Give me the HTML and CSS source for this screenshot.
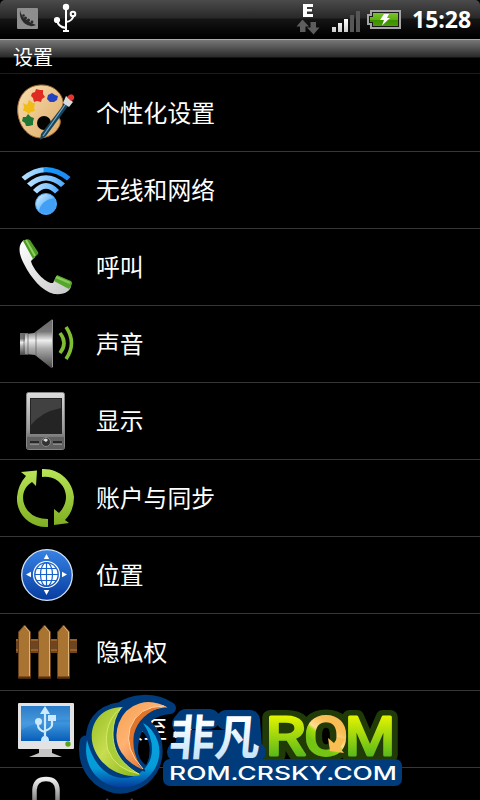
FILE: index.html
```html
<!DOCTYPE html>
<html lang="zh-CN">
<head>
    <meta charset="UTF-8">
    <meta name="viewport" content="width=device-width, initial-scale=1.0">
    <title>设置</title>
    <link rel="stylesheet" href="styles.css">
</head>
<body>
    <div class="phone">
        <div class="statusbar">
            <svg class="notify" width="80" height="39" viewBox="0 0 80 39">
                <rect x="17" y="8" width="21" height="21" rx="1" fill="#8e8e8e"/>
                <path d="M20 10Q21 17 27 20Q32 24 36 25Q30 28 24 23Q19 18 20 10Z" fill="#292929"/>
                <g fill="#292929"><circle cx="23.5" cy="15.500" r="1.300"/><circle cx="25.5" cy="18" r="1.500"/><circle cx="28.5" cy="20" r="1.500"/><circle cx="32" cy="22" r="1.400"/></g>
                <g fill="none" stroke="#fff" stroke-width="2">
                    <path d="M66 7V30M57 20Q58 27 66 28M66 22Q73 21 73.500 15" />
                    <circle cx="73" cy="14" r="2.300"/>
                </g>
                <circle cx="66" cy="7" r="3.200" fill="#fff"/>
                <circle cx="57" cy="20" r="3.100" fill="#fff"/>
                <path d="M63 30h6v2h-6z" fill="#fff"/>
            </svg>
            <svg class="signals" width="110" height="39" viewBox="295 0 110 39">
                <path d="M303 4h10v3h-6v2h5v2.500h-5v2.500h6v3h-10z" fill="#fff"/>
                <path d="M302.500 19.500L309 26.500h-3.500V32h-5.500v-5.500h-3.500zM313.500 34.500L307 27.500h3.500V22h5.500v5.500h3.500z" fill="#5d5d5d"/>
                <g fill="url(#bars)">
                    <path d="M332 27h4v5h-4zM338 23h4v9h-4zM344 19h4v13h-4z"/>
                </g>
                <path d="M350 15h4v17h-4zM356 11h4v21h-4z" fill="#565656"/>
                <path d="M371 11h29v17h-29v-4h-3v-9h3z" fill="#191919" stroke="#a5a5a5" stroke-width="2"/>
                <path d="M373 13h25v13h-25v-4h-3v-5h3z" fill="url(#battery)"/>
                <path d="M384 14h5l-2 4h3l-8 7.500 2-5.500h-4z" fill="#fff"/>
                <defs>
                    <linearGradient id="bars" x2="0" y2="1"><stop stop-color="#fff"/><stop offset="1" stop-color="#ccc"/></linearGradient>
                    <linearGradient id="battery" x2="0" y2="1"><stop stop-color="#79c52b"/><stop offset=".5" stop-color="#5fb010"/><stop offset=".55" stop-color="#3c8f00"/><stop offset="1" stop-color="#4a9d05"/></linearGradient>
                </defs>
            </svg>
            <span class="clock">15:28</span>
        </div>
        <div class="titlebar">设置</div>

        <ul class="settings">
            <li>
                <svg class="icon" viewBox="0 0 96 76">
                    <defs><linearGradient id="wood" x2="1" y2="1"><stop stop-color="#f9dfb0"/><stop offset="1" stop-color="#dda965"/></linearGradient></defs>
                    <path d="M40 10C56 9 64 22 63 29C62 35 56 38 59 43C63 47 58 57 49 61C36 67 24 58 20 47C13 29 22 11 40 10Z" fill="url(#wood)" stroke="#9b6731"/>
                    <circle cx="44" cy="48" r="7" fill="#050300"/>
                    <path d="M32 18l3-1 1-3 4 1 3 0 0 4 2 3-3 2-1 3-4-1-3 1-1-4-2-2z" fill="#e02b23"/>
                    <path d="M48 20l4-2 3 2 3 1-1 4-3 2-4 0-3-3z" fill="#2442c4"/>
                    <path d="M23 28l4 2 2-5 4 3 2 0-1 5 1 3-4 1-2 2-4-3-2 0 1-4z" fill="#f1bb18"/>
                    <path d="M23 42l3 0 2-3 3 3 3 1-1 4 0 3-4 1-3 0-1-3-3-2z" fill="#207634"/>
                    <path d="M68 24l3 3-25 34-6 4 1-6z" fill="#17455f"/>
                    <path d="M67 27L43 61" stroke="#75a9c4" stroke-width="1.200"/>
                    <path d="M66 21l7 6-4 5-6-4z" fill="#d9dadb"/>
                    <path d="M67 22q4-5 7-1 1 4-3 5z" fill="#e93529"/>
                </svg>
                <span>个性化设置</span>
            </li>
            <li>
                <svg class="icon" viewBox="0 0 96 76">
                    <defs>
                        <linearGradient id="wave" x2="1" y2="0"><stop stop-color="#b5dfff"/><stop offset=".44" stop-color="#8bccff"/><stop offset=".46" stop-color="#139aff"/><stop offset="1" stop-color="#2188f2"/></linearGradient>
                        <linearGradient id="wave2" x2="1" y2="0"><stop stop-color="#b9e1ff"/><stop offset=".6" stop-color="#86c8ff"/><stop offset="1" stop-color="#48a9ff"/></linearGradient>
                        <linearGradient id="ball" x2="1" y2="1"><stop offset=".1" stop-color="#d0ebff"/><stop offset=".5" stop-color="#6fbcfb"/><stop offset="1" stop-color="#2b8df0"/></linearGradient>
                    </defs>
                    <path d="M21.500 25Q46 5 70.500 25L67 28.500Q46 12 25 28.500Z" fill="url(#wave)"/>
                    <path d="M27 31.500Q46 15 65 31.500L61 35Q46 22 31 35Z" fill="url(#wave2)"/>
                    <path d="M33 38Q46 24 59 38L55 41.500Q46 32 37 41.500Z" fill="url(#wave2)"/>
                    <circle cx="46" cy="52" r="10.500" fill="url(#ball)" stroke="#4aa5f7"/>
                    <path d="M39 59Q41 48 55 46Q57 55 50 60Q44 63 39 59Z" fill="#429ff6"/>
                </svg>
                <span>无线和网络</span>
            </li>
            <li>
                <svg class="icon" viewBox="0 0 96 76">
                    <defs><linearGradient id="phone" x2="1" y2="1"><stop stop-color="#fff"/><stop offset="1" stop-color="#c7c7c7"/></linearGradient></defs>
                    <path d="M24 11C18 15 18 24 24 35C31 49 42 62 54 65C65 66 71 62 71 56L56 48L53 54C46 55 33 41 31 32L35 28Z" fill="url(#phone)"/>
                    <path d="M23 12Q27 9 30 11L38 23Q39 25 37 26L33 30Z" fill="#4b9a21"/>
                    <path d="M26 11l9 16M57 48l14 7" stroke="#90cf60" stroke-width="2"/>
                    <path d="M57 46L71 52Q73 54 71 57L69 60L54 52Z" fill="#55a62b"/>
                    <path d="M56 48l14 6" stroke="#8acc58" stroke-width="2"/>
                </svg>
                <span>呼叫</span>
            </li>
            <li>
                <svg class="icon" viewBox="0 0 96 76">
                    <defs>
                        <linearGradient id="steel" x2="0" y2="1"><stop stop-color="#6a6a6a"/><stop offset=".25" stop-color="#777"/><stop offset=".43" stop-color="#eee"/><stop offset=".6" stop-color="#aaa"/><stop offset="1" stop-color="#444"/></linearGradient>
                    </defs>
                    <path d="M20 27h8v22h-8z" fill="url(#steel)"/>
                    <path d="M25 28L34 27L51 14Q53 12 53 16V60Q53 64 50 61L35 49L25 48Z" fill="url(#steel)"/>
                    <path d="M24 28v20M28 28v20M36 26v24" stroke="#555" opacity=".65"/>
                    <path d="M52.500 14V61" fill="none" stroke="#999"/>
                    <path d="M60 27Q68 37 60 47M66 21Q77 37 66 53" fill="none" stroke="#7fbd32" stroke-width="3.600"/>
                </svg>
                <span>声音</span>
            </li>
            <li>
                <svg class="icon" viewBox="0 0 96 76">
                    <defs><linearGradient id="handset" x2="0" y2="1"><stop stop-color="#ddd"/><stop offset=".65" stop-color="#999"/><stop offset="1" stop-color="#444"/></linearGradient></defs>
                    <rect x="26.500" y="9.500" width="38" height="57" rx="2" fill="url(#handset)" stroke="#858585"/>
                    <path d="M30 15h32v36h-32z" fill="#242424"/>
                    <path d="M31 16h30v9Q41 29 31 42z" fill="#414141"/>
                    <path d="M27 54h37v12h-37z" fill="#606060"/>
                    <path d="M30 59.500h9M53 59.500h9" stroke="#282828" stroke-width="3"/>
                    <path d="M30 61h9M53 61h9" stroke="#b5b5b5"/>
                    <circle cx="46" cy="59" r="4.500" fill="#333" stroke="#888"/>
                    <path d="M43 57q3-3 5 0l-2 2z" fill="#ddd"/>
                </svg>
                <span>显示</span>
            </li>
            <li>
                <svg class="icon" viewBox="0 0 96 76">
                    <defs><linearGradient id="sync" x2="0" y2="1"><stop stop-color="#b8e557"/><stop offset="1" stop-color="#7fae22"/></linearGradient></defs>
                    <path d="M21 12L37 10.500L36 26L32 22C22 28 20 41 28 51Q35 59 48 59V67C29 68 16 53 17 37Q18 25 26 16Z" fill="url(#sync)"/>
                    <path d="M42 9C59 8 73 21 74 37Q74 51 65 60L69 63L54 65L54 49L59 53C69 43 68 29 58 21Q51 16 42 17Z" fill="url(#sync)"/>
                </svg>
                <span>账户与同步</span>
            </li>
            <li>
                <svg class="icon" viewBox="0 0 96 76">
                    <defs><linearGradient id="globe" x2="0" y2="1"><stop stop-color="#3783e5"/><stop offset="1" stop-color="#073ca0"/></linearGradient></defs>
                    <circle cx="47" cy="38" r="25.300" fill="url(#globe)" stroke="#d7e4f7" stroke-width="1.300"/>
                    <circle cx="46.500" cy="37.500" r="13" fill="none" stroke="#fff" stroke-width="1.200"/>
                    <circle cx="46.500" cy="37.500" r="11" fill="#fff"/>
                    <g fill="none" stroke="#1761ca" stroke-width="1.200"><path d="M46.500 26v23M35 37.500h23M37 31.500h19M37 43.500h19"/><ellipse cx="46.500" cy="37.500" rx="6" ry="12"/></g>
                    <path d="M46.500 17l2.700 5h-5.400zM46.500 58l2.700-5h-5.400zM26 37.500l5-2.700v5.400zM67 37.500l-5-2.700v5.400z" fill="#fff"/>
                </svg>
                <span>位置</span>
            </li>
            <li>
                <svg class="icon" viewBox="0 0 96 76">
                    <path d="M16 25h61v14H16z" fill="#6f4520"/>
                    <path d="M16 26h61M16 36h61" stroke="#96602b" stroke-width="2"/>
                    <g stroke="#684019"><path d="M18.500 18l6-7 6 7v46h-12z" fill="#a97331"/><path d="M38.500 18l6-7 6 7v46h-12z" fill="#a97331"/><path d="M57.500 18l6-7 6 7v46h-12z" fill="#a97331"/></g>
                    <path d="M24.500 12l5 6v44M44.500 12l5 6v44M63.500 12l5 6v44" fill="none" stroke="#dfb477"/>
                    <path d="M18 63.500h13M38 63.500h13M57 63.500h13" stroke="#5c310d" stroke-width="2"/>
                </svg>
                <span>隐私权</span>
            </li>
            <li>
                <svg class="icon" viewBox="0 0 96 76">
                    <defs><linearGradient id="screen" x2="0" y2="1"><stop stop-color="#1266b8"/><stop offset=".5" stop-color="#3d94dc"/><stop offset="1" stop-color="#075eb8"/></linearGradient></defs>
                    <rect x="18" y="12" width="56" height="46" rx="1" fill="#e3e3e3"/>
                    <path d="M21 15h49v35h-49z" fill="url(#screen)"/>
                    <path d="M21 15h49v14Q43 27 21 39z" fill="#5ba7e4" opacity=".35"/>
                    <path d="M45 49V22M38 31v3q0 5 7 7M52 29v5q0 3-7 6" fill="none" stroke="#cceaff" stroke-width="2.200"/>
                    <path d="M45 15l5 8H40zM48 24h8v6h-8zM41 50q0-5 4-5t4 5z" fill="#cceaff"/><circle cx="38.500" cy="30.500" r="3.500" fill="#cceaff"/>
                    <circle cx="68" cy="53" r="2.700" fill="#5aa516"/>
                    <path d="M39 58h13v4l10 4H29l10-4z" fill="#c5c5c5"/>
                </svg>
                <span>连接至 PC</span>
            </li>
            <li class="last">
                <svg class="icon" viewBox="0 0 96 76">
                    <defs><linearGradient id="lock" x2="0" y2="1"><stop stop-color="#eee"/><stop offset="1" stop-color="#777"/></linearGradient></defs>
                    <path d="M34.500 35V22Q35 11 46 11T57.500 22V35" fill="none" stroke="url(#lock)" stroke-width="4.500"/>
                </svg>
                <span>安全</span>
            </li>
        </ul>

        <!-- logo over the bottom of the list -->
        <svg class="watermark" viewBox="70 690 340 110">
            <defs>
                <linearGradient id="ring" x2="0" y2="1"><stop stop-color="#07a6e2"/><stop offset=".7" stop-color="#049bd8"/><stop offset="1" stop-color="#073a9b"/></linearGradient>
                <linearGradient id="leaf" x2="1" y2="1"><stop stop-color="#93bc22"/><stop offset=".45" stop-color="#c8dd50"/><stop offset="1" stop-color="#82b517"/></linearGradient>
                <linearGradient id="flame" x2=".8" y2="1"><stop stop-color="#f4a04a"/><stop offset=".45" stop-color="#ffb273"/><stop offset="1" stop-color="#d95c12"/></linearGradient>
                <linearGradient id="ice" x2="0" y2="1"><stop offset=".3" stop-color="#fff"/><stop offset="1" stop-color="#b4dcf8"/></linearGradient>
                <linearGradient id="lime" gradientUnits="userSpaceOnUse" x1="0" y1="715" x2="0" y2="757"><stop stop-color="#e6f500"/><stop offset="1" stop-color="#56b71b"/></linearGradient>
                <linearGradient id="gold" gradientUnits="userSpaceOnUse" x1="312" y1="748" x2="330" y2="723"><stop offset=".2" stop-color="#74c414"/><stop offset=".5" stop-color="#a5dd0a"/><stop offset=".6" stop-color="#ffdc90"/><stop offset="1" stop-color="#f9bd53"/></linearGradient>
            </defs>
            <!-- dark outlines -->
            <g class="rom outline"><text x="265.500" y="755" textLength="40" lengthAdjust="spacingAndGlyphs">R</text><text x="304" y="755" textLength="44" lengthAdjust="spacingAndGlyphs">O</text><text x="345" y="755" textLength="50" lengthAdjust="spacingAndGlyphs">M</text></g>
            <g fill="none" stroke="#003b7b" stroke-linejoin="round" stroke-linecap="round">
                <path d="M86 742Q83 765 99 779Q120 795 143 779Q160 764 155 741Q152 731 146 726" stroke-width="13"/>
                <path d="M121 708C98 711 91 726 92 741C96 763 117 778 140 776L144 771C132 764 130 750 134 736C139 718 155 709 170 708C153 697 131 700 121 708Z" fill="#003b7b" stroke-width="12"/>
                <path d="M182 724L186 719H210M226 720H250L252 748M177 752H256" stroke-width="20"/>
                <path d="M182 735H245V772H176Z" fill="#003b7b" stroke-width="10"/>
                <path d="M170 766H395V779H170Z" fill="#003b7b" stroke-width="14"/>
            </g>
            <!-- swirl -->
            <path d="M87 740C81 771 105 791 129 787C151 783 164 761 158 742Q153 728 143 723Q155 741 151 757C146 774 129 782 113 776Q94 768 87 740Z" fill="url(#ring)"/>
            <path d="M123 707C100 707 90 724 92 741C96 765 121 780 141 775C119 766 111 751 110 733Q110 716 123 707Z" fill="url(#leaf)"/>
            <path d="M121 708C108 718 104 735 108 750Q115 769 139 774C118 762 113 748 113 733Q113 719 121 708Z" fill="#a8cd36" stroke="#e1ef7a" stroke-width=".8"/>
            <path d="M170 708C149 695 126 702 118 723C110 745 124 764 145 771C133 759 129 744 134 730C139 716 153 708 170 708Z" fill="url(#flame)" stroke="#003b7b" stroke-width="1.500"/>
            <path d="M164 706Q138 706 130 728Q124 749 143 769Q131 754 134 734Q139 714 164 706Z" fill="#df742a"/>
            <path d="M164 706Q138 706 130 728Q124 749 143 769" fill="none" stroke="#ffd7ac"/>
            <text class="brand" transform="translate(168 755) skewX(-5)" textLength="91" lengthAdjust="spacingAndGlyphs">非凡</text>
            <g class="rom"><text x="265.500" y="755" textLength="40" lengthAdjust="spacingAndGlyphs">R</text><text class="gold" x="304" y="755" textLength="44" lengthAdjust="spacingAndGlyphs">O</text><text x="345" y="755" textLength="50" lengthAdjust="spacingAndGlyphs">M</text></g>
            <path d="M328 738L334 743L338 737L345 739L340 748L344 753L330 751Z" fill="#f8be52"/>
            <text class="site" x="169" y="779.500" textLength="228" lengthAdjust="spacingAndGlyphs">ROM.CRSKY.COM</text>
        </svg>
    </div>
</body>
</html>
```
FILE: styles.css
```css
body {
    margin: 0;
    background-color: #000;
    color: #fff;
    font-family: "Noto Sans", "Noto Sans CJK SC", sans-serif;
}
.phone {
    position: relative;
    width: 480px;
    height: 800px;
    overflow: hidden;
    background-color: #000;
}
.statusbar {
    display: flex;
    height: 39px;
    background: linear-gradient(#4b4b4b 0, #282828 18px, #151515 19px, #000 36px);
    border-radius: 5px 5px 0 0;
}
.signals {
    margin-left: 215px;
}
.clock {
    margin-left: 7px;
    font-family: "Open Sans", sans-serif;
    font-size: 23px;
    font-weight: bold;
    line-height: 39px;
}
.titlebar {
    box-sizing: border-box;
    height: 35px;
    padding-left: 13px;
    border-top: 1px solid #aaa;
    border-bottom: 1px solid #1c1c1c;
    background: linear-gradient(#777 0, #292929 17px, #000 18px);
    font-family: "Noto Sans CJK SC", sans-serif;
    font-size: 20px;
    line-height: 33px;
}
.settings {
    margin: 0;
    padding: 0;
    list-style: none;
}
.settings li {
    box-sizing: border-box;
    display: flex;
    align-items: center;
    height: 77px;
    border-bottom: 1px solid #373737;
    font-family: "Noto Sans CJK SC", sans-serif;
    font-size: 23.8px;
}
.settings li:first-child {
    height: 78px;
}
.settings span {
    padding-bottom: 3px;
}
.settings li:first-child span {
    padding-bottom: 2px;
}
.settings .last span {
    padding: 4px 0 0;
    color: #444;
}
.icon {
    flex: none;
    width: 96px;
    height: 76px;
}
.watermark {
    position: absolute;
    left: 70px;
    top: 690px;
    width: 340px;
    height: 110px;
}
.brand {
    font-family: "Noto Sans CJK SC", sans-serif;
    font-size: 48px;
    font-weight: bold;
    fill: url(#ice);
}
.rom {
    font-family: Roboto, sans-serif;
    font-size: 53px;
    fill: url(#lime);
    stroke: url(#lime);
    stroke-width: 3;
    stroke-linejoin: round;
}
.rom.outline {
    fill: #203b08;
    stroke: #203b08;
    stroke-width: 14;
}
.rom .gold {
    fill: url(#gold);
    stroke: url(#gold);
}
.site {
    font-family: Inter, sans-serif;
    font-size: 19px;
    font-weight: 500;
    fill: #fff;
}
```
